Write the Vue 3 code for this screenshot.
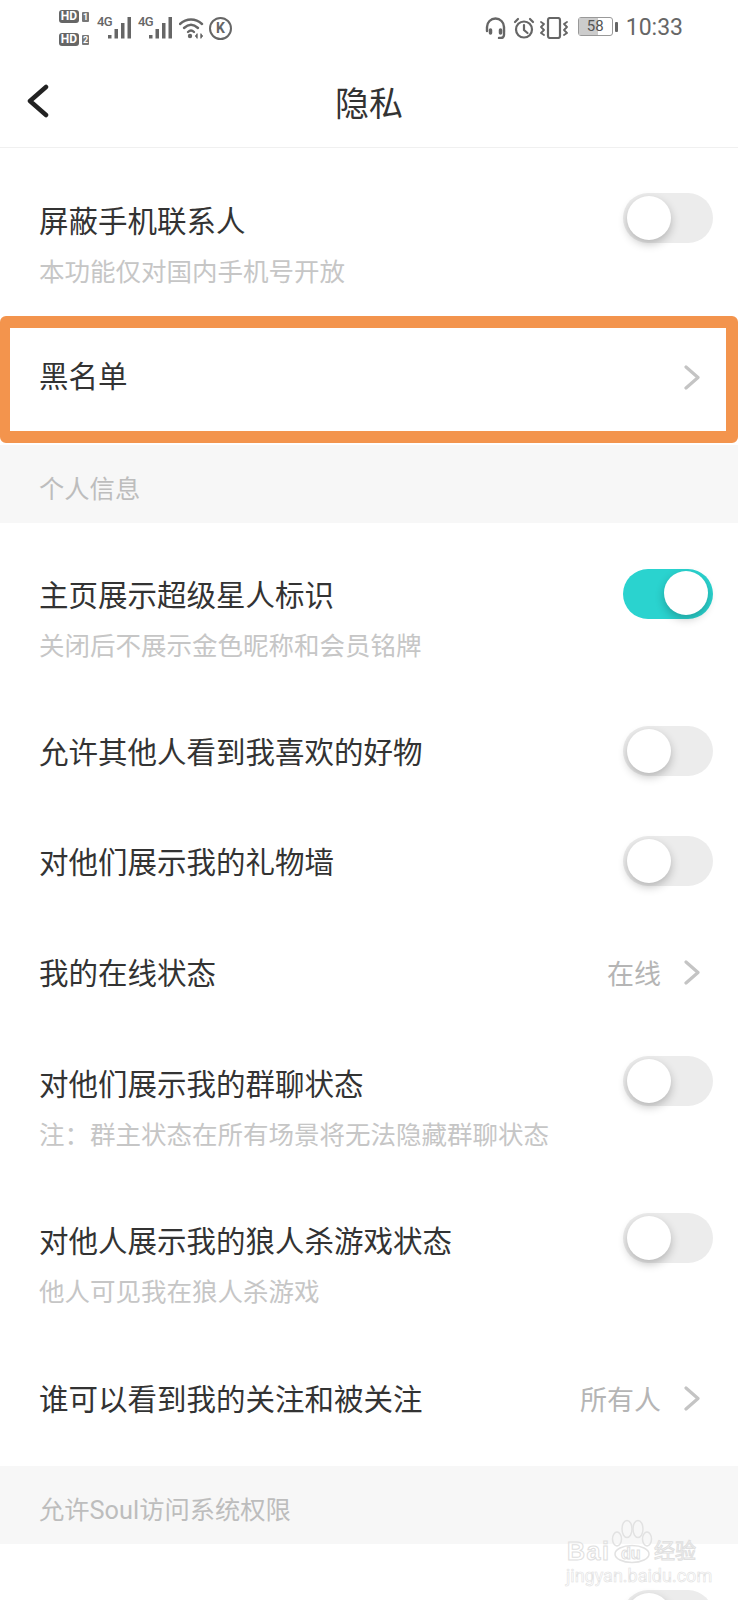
<template>
  <div class="page">
    <div class="status-bar">
      <div class="status-left">
        <div class="hd-stack">
          <div class="hd-line"><span class="hd">HD</span><span class="sim">1</span></div>
          <div class="hd-line"><span class="hd">HD</span><span class="sim">2</span></div>
        </div>
        <div v-for="n in 2" :key="n" class="signal">
          <span class="net">4G</span>
          <svg width="23" height="22" viewBox="0 0 23 22">
            <rect x="0" y="18" width="3.500" height="3.500" fill="#666" />
            <rect x="6.500" y="12" width="3.500" height="9.500" fill="#666" />
            <rect x="13" y="6" width="3.500" height="15.500" fill="#666" />
            <rect x="19.500" y="0" width="3.500" height="21.500" fill="#666" />
          </svg>
        </div>
        <svg class="wifi" width="25" height="22" viewBox="0 0 25 22" fill="none" stroke="#666" stroke-width="2.400" stroke-linecap="round">
          <path d="M1 7C7.500 1 16.500 1 23 7" />
          <path d="M5 11C9.500 6.800 14.500 6.800 19 11" />
          <path d="M9 15C10.800 13.300 13.200 13.300 15 15" />
          <circle cx="11" cy="19" r="2.200" fill="#666" stroke="none" />
          <path d="M18 17v4M22 17v4" stroke-width="1" />
          <path d="M18 17l-2 2 2 2zM22 17l2 2-2 2z" fill="#666" stroke-width="0.500" />
        </svg>
        <div class="k-badge">K</div>
      </div>
      <div class="status-right">
        <svg width="21" height="22" viewBox="0 0 21 22" fill="none" stroke="#666" stroke-width="2.400" stroke-linecap="round">
          <path d="M2 14V10a8.500 8.500 0 0 1 17 0v4" />
          <rect x="4.500" y="12" width="2" height="5" rx="1" fill="#666" stroke-width="1.500" />
          <rect x="14.500" y="12" width="2" height="5" rx="1" fill="#666" stroke-width="1.500" />
          <path d="M19 14v4a3 3 0 0 1-3 3h-2" />
        </svg>
        <svg class="alarm" width="22" height="22" viewBox="0 0 22 22" fill="none" stroke="#666" stroke-width="2.200" stroke-linecap="round">
          <circle cx="11" cy="12.500" r="8" />
          <path d="M11 8v5l3.500 3" />
          <path d="M2 5l3-3M20 5l-3-3" />
        </svg>
        <svg width="28" height="22" viewBox="0 0 28 22" fill="none" stroke="#666" stroke-width="2.200" stroke-linecap="round" stroke-linejoin="round">
          <rect x="8" y="1" width="12" height="20" rx="2" />
          <path d="M1 5l3 2-3 3 3 3-3 3 3 2" stroke-width="1.800" />
          <path d="M27 5l-3 2 3 3-3 3 3 3-3 2" stroke-width="1.800" />
        </svg>
        <div class="battery">
          <div class="battery-body">
            <div class="battery-fill"></div>
            <span class="battery-text">58</span>
          </div>
          <div class="battery-tip"></div>
        </div>
        <span class="time">10:33</span>
      </div>
    </div>

    <header class="nav">
      <svg class="back" width="22" height="34" viewBox="0 0 22 34" fill="none" stroke="#222" stroke-width="4.500" stroke-linecap="round" stroke-linejoin="round">
        <path d="M19 3L3 17l16 14" />
      </svg>
      <h1 class="nav-title">隐私</h1>
    </header>

    <section class="group first">
      <div class="row with-sub">
        <div class="row-text">
          <div class="row-title">屏蔽手机联系人</div>
          <div class="row-sub">本功能仅对国内手机号开放</div>
        </div>
        <div class="toggle"><span class="knob"></span></div>
      </div>
      <div class="row highlighted">
        <div class="row-text">
          <div class="row-title">黑名单</div>
        </div>
        <svg class="chevron" width="16" height="25" viewBox="0 0 16 25" fill="none" stroke="#c4c4c4" stroke-width="3.200" stroke-linecap="round" stroke-linejoin="round">
          <path d="M2 2l12 10.500L2 23" />
        </svg>
        <div class="mark-box"></div>
      </div>
    </section>

    <div class="section-head">个人信息</div>

    <section class="group second">
      <div v-for="item in rows" :key="item.title" class="row" :class="{ 'with-sub': item.sub, 'value-row': item.value }">
        <div class="row-text">
          <div class="row-title">{{ item.title }}</div>
          <div v-if="item.sub" class="row-sub">{{ item.sub }}</div>
        </div>
        <div v-if="item.toggle !== undefined" class="toggle" :class="{ on: item.toggle }"><span class="knob"></span></div>
        <div v-else class="row-value">
          <span>{{ item.value }}</span>
          <svg class="chevron" width="16" height="25" viewBox="0 0 16 25" fill="none" stroke="#c4c4c4" stroke-width="3.200" stroke-linecap="round" stroke-linejoin="round">
            <path d="M2 2l12 10.500L2 23" />
          </svg>
        </div>
      </div>
    </section>

    <div class="section-head">允许Soul访问系统权限</div>

    <section class="group last">
      <div class="row"><div class="row-text"></div><div class="toggle"><span class="knob"></span></div></div>
    </section>

    <div class="watermark">
      <svg class="paw" width="44" height="46" viewBox="0 0 44 46" fill="none" stroke="#e2e2e2" stroke-width="1.500">
        <ellipse cx="17" cy="11" rx="5" ry="8.500" />
        <ellipse cx="28" cy="11" rx="5" ry="8.500" />
        <ellipse cx="7" cy="21" rx="4.500" ry="7" />
        <ellipse cx="37" cy="21" rx="4.500" ry="7" />
        <ellipse cx="22" cy="36" rx="17" ry="8.500" />
      </svg>
      <span class="wm-bai">Bai</span>
      <span class="wm-du">du</span>
      <span class="wm-cn">经验</span>
      <div class="wm-url">jingyan.baidu.com</div>
    </div>
  </div>
</template>

<script setup>
const rows = [
  { title: '主页展示超级星人标识', sub: '关闭后不展示金色昵称和会员铭牌', toggle: true },
  { title: '允许其他人看到我喜欢的好物', toggle: false },
  { title: '对他们展示我的礼物墙', toggle: false },
  { title: '我的在线状态', value: '在线' },
  { title: '对他们展示我的群聊状态', sub: '注：群主状态在所有场景将无法隐藏群聊状态', toggle: false },
  { title: '对他人展示我的狼人杀游戏状态', sub: '他人可见我在狼人杀游戏', toggle: false },
  { title: '谁可以看到我的关注和被关注', value: '所有人' }
]
</script>

<style>
html, body {
  background: #fff;
}
</style>

<style scoped>
.page {
  position: relative;
  width: 738px;
  height: 1600px;
  overflow: hidden;
  background: #fff;
  font-family: Roboto, "Noto Sans CJK SC", sans-serif;
}

.status-bar {
  height: 50px;
  display: flex;
  justify-content: space-between;
  padding: 0 55px 0 59px;
  color: #666;
}

.status-left,
.status-right {
  display: flex;
  align-items: flex-start;
  padding-top: 17px;
}

.hd-stack {
  margin-top: -7px;
  display: flex;
  flex-direction: column;
  gap: 10px;
  margin-right: 8px;
}

.hd-line {
  display: flex;
  align-items: center;
  gap: 3px;
}

.hd {
  width: 20px;
  height: 13px;
  background: #666;
  color: #fff;
  border-radius: 3px;
  font-size: 12px;
  line-height: 13px;
  font-weight: 700;
  text-align: center;
}

.sim {
  width: 7px;
  height: 10px;
  background: #777;
  color: #fff;
  border-radius: 1px;
  font-size: 9px;
  line-height: 10px;
  font-weight: 700;
  text-align: center;
}

.signal {
  position: relative;
  width: 41px;
  height: 22px;
  padding-left: 11px;
  box-sizing: border-box;
}

.net {
  position: absolute;
  left: 0;
  top: -2px;
  font-size: 13px;
  line-height: 14px;
  letter-spacing: -0.6px;
  font-weight: 500;
  color: #666;
}

.k-badge {
  width: 23px;
  height: 23px;
  box-sizing: border-box;
  margin-left: 5px;
  border: 2.5px solid #666;
  border-radius: 50%;
  font-size: 14px;
  line-height: 18px;
  font-weight: 700;
  text-align: center;
  color: #666;
}

.status-right {
  gap: 7px;
}

.alarm {
  margin-right: -2px;
}

.battery {
  display: flex;
  align-items: center;
  gap: 2px;
  margin-left: 3px;
}

.battery-body {
  position: relative;
  width: 35px;
  height: 19px;
  box-sizing: border-box;
  border: 1px solid #999;
  border-radius: 3px;
}

.battery-fill {
  width: 58%;
  height: 100%;
  background: #ccc;
}

.battery-text {
  position: absolute;
  inset: 0;
  font-size: 15px;
  line-height: 17px;
  text-align: center;
  color: #555;
}

.battery-tip {
  width: 3px;
  height: 10px;
  background: #666;
  border-radius: 1px;
}

.time {
  margin-left: 1px;
  font-size: 23px;
  line-height: 22px;
  color: #666;
}

.nav {
  position: relative;
  height: 98px;
  box-sizing: border-box;
  display: flex;
  align-items: center;
  justify-content: center;
  border-bottom: 1px solid #f0f0f0;
}

.back {
  position: absolute;
  left: 27px;
  top: 34px;
}

.nav-title {
  margin: 5px 0 0;
  font-size: 34px;
  font-weight: 400;
  color: #333;
}

.group.first {
  padding: 17px 0 13px;
}

.group.second {
  padding: 18px 0 12px;
}

.group.last {
  padding-top: 16px;
}

.row {
  position: relative;
  height: 110px;
  box-sizing: border-box;
  display: flex;
  align-items: center;
  justify-content: space-between;
  padding: 0 25px 0 39px;
}

.row-text {
  padding-top: 4px;
}

.row.value-row {
  height: 112px;
}

.row.with-sub {
  height: 157px;
  align-items: flex-start;
  padding-top: 28px;
}

.group.second .row.with-sub:first-child {
  height: 155px;
}

.row.highlighted {
  padding-right: 38px;
}

.row.highlighted .row-text {
  padding-top: 0;
}

.row.with-sub .row-text {
  padding-top: 8px;
}

.group.second .row.with-sub:first-child .row-text {
  padding-top: 6px;
}

.row-title {
  font-size: 29.500px;
  line-height: 42px;
  color: #333;
}

.row-sub {
  margin-top: 11px;
  font-size: 25.500px;
  line-height: 36px;
  color: #c6c6c6;
}

.row-value {
  display: flex;
  align-items: center;
  gap: 23px;
  padding-right: 13px;
  font-size: 27px;
  color: #b5b5b5;
}

.mark-box {
  position: absolute;
  top: -6px;
  bottom: -11px;
  left: 0;
  right: 0;
  border-style: solid;
  border-color: #f3944d;
  border-width: 12px 12px 12px 10px;
  border-radius: 6px;
}

.toggle {
  position: relative;
  flex: none;
  width: 90px;
  height: 50px;
  border-radius: 25px;
  background: #ececec;
}

.knob {
  position: absolute;
  top: 3px;
  left: 4px;
  width: 44px;
  height: 44px;
  border-radius: 50%;
  background: #fff;
  box-shadow: 0 4px 10px rgba(0, 0, 0, 0.24);
}

.toggle.on {
  background: #2ad3cf;
}

.toggle.on .knob {
  left: 41px;
  top: 2px;
}

.section-head {
  height: 78px;
  padding: 27px 0 0 39px;
  box-sizing: border-box;
  background: #f7f7f7;
  font-size: 25.300px;
  line-height: 36px;
  color: #bdbdbd;
}

.watermark {
  position: absolute;
  left: 566px;
  top: 1518px;
  width: 134px;
  height: 68px;
  color: transparent;
}

.paw {
  position: absolute;
  left: 44px;
  top: 0;
}

.wm-bai,
.wm-du,
.wm-cn {
  position: absolute;
  font-family: "Liberation Sans", "Noto Sans CJK SC", sans-serif;
  font-weight: 700;
  -webkit-text-stroke: 1px #e0e0e0;
}

.wm-bai {
  left: 1px;
  top: 18px;
  font-size: 25px;
  line-height: 30px;
  letter-spacing: 1.500px;
}

.wm-du {
  left: 55px;
  top: 27px;
  font-size: 16px;
  line-height: 18px;
}

.wm-cn {
  left: 88px;
  top: 19px;
  font-size: 21px;
  line-height: 28px;
  font-weight: 400;
}

.wm-url {
  position: absolute;
  left: 0;
  top: 48px;
  width: 134px;
  font-size: 18px;
  line-height: 20px;
  -webkit-text-stroke: 0.6px #e2e2e2;
  white-space: nowrap;
}
</style>
